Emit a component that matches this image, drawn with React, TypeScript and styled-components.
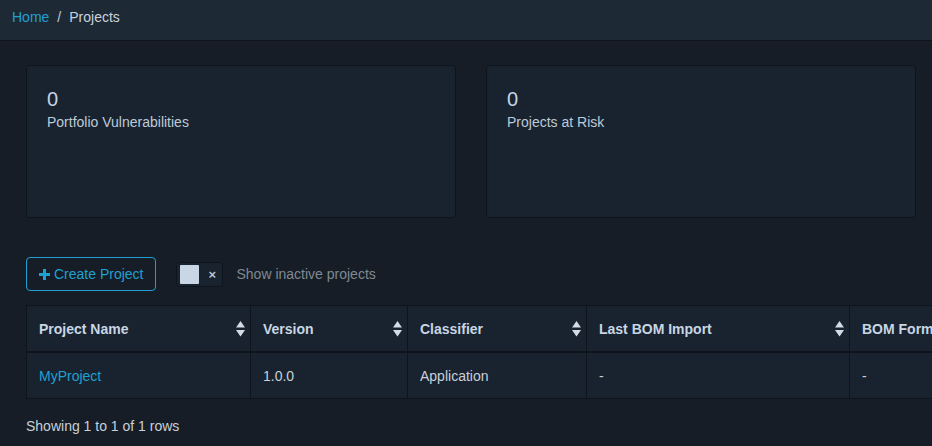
import React from "react";
import styled, { createGlobalStyle } from "styled-components";

const Global = createGlobalStyle`
  html, body {
    margin: 0;
    padding: 0;
    overflow: hidden;
    background: #161d26;
  }
  body {
    font-family: "Liberation Sans", Arial, sans-serif;
    font-size: 14px;
    line-height: 1.5;
    color: #c8d3de;
  }
  * { box-sizing: border-box; }
`;

const Page = styled.div`
  width: 932px;
  min-height: 446px;
  background: #161d26;
`;

const TopBar = styled.nav`
  height: 41px;
  background: #1e2936;
  border-bottom: 1px solid #0f151b;
  padding: 7px 12px 0;
  display: flex;
  align-items: flex-start;
  line-height: 21px;
`;

const Crumb = styled.span<{ $link?: boolean }>`
  color: ${(p) => (p.$link ? "#20a0d0" : "#c9d2dc")};
`;

const Sep = styled.span`
  color: #c0c9d2;
  padding: 0 8px;
`;

const Main = styled.main`
  padding: 24px 16px 0 26px;
`;

const CardRow = styled.div`
  display: grid;
  grid-template-columns: 430px 430px;
  gap: 30px;
`;

const Card = styled.section`
  height: 153px;
  background: #19232f;
  border: 1px solid #0e141a;
  border-radius: 4px;
  padding: 21px 20px;
`;

const Value = styled.div`
  font-size: 20px;
  line-height: 25px;
  color: #c6d4e2;
`;

const Label = styled.div`
  font-size: 14px;
  line-height: 21px;
  color: #bccbd9;
`;

const Toolbar = styled.div`
  margin-top: 39px;
  display: flex;
  align-items: center;
`;

const CreateButton = styled.button`
  height: 34px;
  padding: 0 12px;
  display: flex;
  align-items: center;
  gap: 4px;
  white-space: nowrap;
  background: transparent;
  border: 1px solid #20a0d0;
  border-radius: 4px;
  color: #20a0d0;
  font-family: inherit;
  font-size: 14px;
  line-height: 20px;
`;

const Toggle = styled.div`
  margin-left: 20px;
  width: 47px;
  height: 25px;
  background: #19232f;
  border: 1px solid #0e141a;
  border-radius: 4px;
  display: flex;
  align-items: center;
  padding-left: 3px;
`;

const Knob = styled.span`
  width: 19px;
  height: 19px;
  background: #c8d6e6;
  border-radius: 1px;
`;

const Cross = styled.span`
  margin-left: 9px;
  font-size: 13px;
  line-height: 13px;
  font-weight: bold;
  color: #b8c4d0;
`;

const ToggleLabel = styled.span`
  margin-left: 13px;
  color: #7f8993;
  font-size: 14px;
`;

const TableWrap = styled.div`
  margin-top: 14px;
  width: 1200px;
`;

const Table = styled.table`
  border-collapse: collapse;
  table-layout: fixed;
  width: 1200px;
  background: #19232f;
`;

const Th = styled.th<{ $w: number }>`
  width: ${(p) => p.$w}px;
  position: relative;
  text-align: left;
  font-weight: bold;
  color: #c8d6e4;
  padding: 13px 12px 11px;
  line-height: 21px;
  border: 1px solid #0e141a;
  border-bottom: 2px solid #0e141a;
  white-space: nowrap;
  overflow: hidden;
`;

const SortIcon = styled.svg`
  position: absolute;
  right: 5px;
  top: 15px;
`;

const Td = styled.td<{ $link?: boolean }>`
  padding: 13px 12px 11px;
  line-height: 21px;
  border: 1px solid #0e141a;
  color: ${(p) => (p.$link ? "#20a0d0" : "#c8d0d9")};
  white-space: nowrap;
`;

const Footer = styled.div`
  margin-top: 17px;
  color: #c8d0d9;
  line-height: 21px;
`;

const Sort = () => (
  <SortIcon width="9" height="16" viewBox="0 0 9 16">
    <path d="M4.5 0 L9 6.5 L0 6.5 Z" fill="#d2dce6" />
    <path d="M0 9 L9 9 L4.5 15.5 Z" fill="#d2dce6" />
  </SortIcon>
);

const Plus = () => (
  <svg width="11" height="11" viewBox="0 0 11 11">
    <path d="M4 0 H7 V4 H11 V7 H7 V11 H4 V7 H0 V4 H4 Z" fill="#20a0d0" />
  </svg>
);

const columns: { title: string; w: number }[] = [
  { title: "Project Name", w: 224 },
  { title: "Version", w: 157 },
  { title: "Classifier", w: 179 },
  { title: "Last BOM Import", w: 263 },
  { title: "BOM Format", w: 180 },
  { title: "Risk Score", w: 197 },
];

export default function App() {
  return (
    <Page>
      <Global />
      <TopBar>
        <Crumb $link>Home</Crumb>
        <Sep>/</Sep>
        <Crumb>Projects</Crumb>
      </TopBar>
      <Main>
        <CardRow>
          <Card>
            <Value>0</Value>
            <Label>Portfolio Vulnerabilities</Label>
          </Card>
          <Card>
            <Value>0</Value>
            <Label>Projects at Risk</Label>
          </Card>
        </CardRow>
        <Toolbar>
          <CreateButton>
            <Plus />
            Create Project
          </CreateButton>
          <Toggle>
            <Knob />
            <Cross>×</Cross>
          </Toggle>
          <ToggleLabel>Show inactive projects</ToggleLabel>
        </Toolbar>
        <TableWrap>
          <Table>
            <thead>
              <tr>
                {columns.map((c) => (
                  <Th key={c.title} $w={c.w}>
                    {c.title}
                    <Sort />
                  </Th>
                ))}
              </tr>
            </thead>
            <tbody>
              <tr>
                <Td $link>MyProject</Td>
                <Td>1.0.0</Td>
                <Td>Application</Td>
                <Td>-</Td>
                <Td>-</Td>
                <Td>0</Td>
              </tr>
            </tbody>
          </Table>
        </TableWrap>
        <Footer>Showing 1 to 1 of 1 rows</Footer>
      </Main>
    </Page>
  );
}
